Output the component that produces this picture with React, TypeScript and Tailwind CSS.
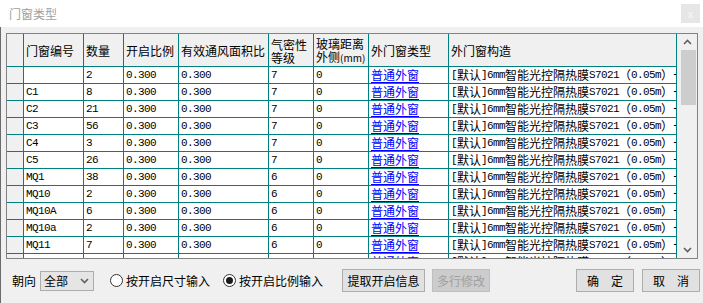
import React from "react";

const CJK = "font-['Noto_Sans_CJK_SC','Microsoft_YaHei',sans-serif]";

function Mixed({ text }: { text: string }) {
  const parts = text.match(/[\x00-\x7f]+|[^\x00-\x7f]+/g) || [];
  return (
    <>
      {parts.map((p, i) =>
        /^[\x00-\x7f]/.test(p) ? (
          <span key={i} className="font-['Liberation_Mono',monospace] text-[11px] tracking-[-0.6px]">
            {p}
          </span>
        ) : (
          <span key={i} className="font-['Noto_Sans_CJK_SC',sans-serif] text-[12px]">
            {p}
          </span>
        )
      )}
    </>
  );
}

const colW = [
  "w-[17px]",
  "w-[60px]",
  "w-[40px]",
  "w-[55px]",
  "w-[90px]",
  "w-[45px]",
  "w-[55px]",
  "w-[80px]",
  "w-[228px]",
];

const headers: (string | string[])[] = [
  "",
  "门窗编号",
  "数量",
  "开启比例",
  "有效通风面积比",
  ["气密性", "等级"],
  ["玻璃距离", "外侧(mm)"],
  "外门窗类型",
  "外门窗构造",
];

const rows: [string, string, string][] = [
  ["", "2", "7"],
  ["C1", "8", "7"],
  ["C2", "21", "7"],
  ["C3", "56", "7"],
  ["C4", "3", "7"],
  ["C5", "26", "7"],
  ["MQ1", "38", "6"],
  ["MQ10", "2", "6"],
  ["MQ10A", "6", "6"],
  ["MQ10a", "2", "6"],
  ["MQ11", "7", "6"],
  ["MQ12", "4", "6"],
];

const CONSTR = "[默认]6mm智能光控隔热膜S7021（0.05m）+";

function Cell({ i, children, gray }: { i: number; children?: React.ReactNode; gray?: boolean }) {
  return (
    <div
      className={`${colW[i]} shrink-0 h-full border-r border-[#008080] pl-[2px] flex items-center overflow-hidden whitespace-nowrap ${
        gray ? "bg-[#f0f0f0]" : "bg-white"
      }`}
    >
      {children}
    </div>
  );
}

function Chevron({ up }: { up?: boolean }) {
  return (
    <svg width="9" height="6" viewBox="0 0 9 6">
      <path
        d={up ? "M1 5 L4.5 1.5 L8 5" : "M1 1 L4.5 4.5 L8 1"}
        fill="none"
        stroke="#606060"
        strokeWidth="1.6"
      />
    </svg>
  );
}

export default function App() {
  return (
    <div className={`w-[703px] h-[303px] overflow-hidden bg-white ${CJK} text-black`}>
      {/* title bar */}
      <div className="h-[27px] bg-white flex items-center justify-between pl-[9px] pr-[3px]">
        <span className="text-[12px] text-[#a0a0a0] leading-none">门窗类型</span>
        <div className="w-[19px] h-[19px] bg-[#e6e6e6] flex items-center justify-center text-[11px] text-[#f8f8f8] leading-none">
          x
        </div>
      </div>
      {/* body */}
      <div className="h-[276px] bg-[#f0f0f0] border-l border-[#6b6b6b] pt-[6px] pl-[5px] flex flex-col">
        {/* table */}
        <div className="w-[692px] h-[226px] border border-[#828282] flex overflow-hidden">
          <div className="w-[670px] shrink-0 h-full overflow-hidden flex flex-col">
            {/* header */}
            <div className="h-[33px] shrink-0 flex border-b border-[#008080] bg-[#f0f0f0]">
              {headers.map((h, i) => (
                <div
                  key={i}
                  className={`${colW[i]} shrink-0 h-full border-r border-[#008080] pl-[2px] flex items-center overflow-hidden whitespace-nowrap text-[12px]`}
                >
                  {Array.isArray(h) ? (
                    <div className="flex flex-col leading-[13px] pt-[1px]">
                      <span>{h[0]}</span>
                      <span>
                        {h[1].replace("(mm)", "")}
                        {h[1].includes("(mm)") && <span className="text-[10px]">(mm)</span>}
                      </span>
                    </div>
                  ) : (
                    <span className="leading-none pt-[2px]">{h}</span>
                  )}
                </div>
              ))}
            </div>
            {/* rows */}
            {rows.map((r, ri) => (
              <div key={ri} className="h-[17px] shrink-0 flex border-b border-[#008080]">
                <Cell i={0} gray />
                <Cell i={1}>
                  <Mixed text={r[0]} />
                </Cell>
                <Cell i={2}>
                  <Mixed text={r[1]} />
                </Cell>
                <Cell i={3}>
                  <Mixed text="0.300" />
                </Cell>
                <Cell i={4}>
                  <Mixed text="0.300" />
                </Cell>
                <Cell i={5}>
                  <Mixed text={r[2]} />
                </Cell>
                <Cell i={6}>
                  <Mixed text="0" />
                </Cell>
                <Cell i={7}>
                  <span className="text-[12px] text-[#0000ff] underline underline-offset-2 leading-none">普通外窗</span>
                </Cell>
                <Cell i={8}>
                  <Mixed text={CONSTR} />
                </Cell>
              </div>
            ))}
          </div>
          {/* scrollbar */}
          <div className="flex-1 h-full bg-[#f0f0f0] flex flex-col items-center">
            <div className="h-[16px] w-full flex items-center justify-center">
              <Chevron up />
            </div>
            <div className="w-[15px] h-[55px] bg-[#cdcdcd] ml-[2px]" />
            <div className="flex-1" />
            <div className="h-[16px] w-full flex items-center justify-center">
              <Chevron />
            </div>
          </div>
        </div>
        {/* bottom bar */}
        <div className="flex-1 flex items-center text-[12px] pl-[6px] pb-[1px]">
          <span className="leading-none">朝向</span>
          <div className="ml-[4px] w-[54px] h-[20px] bg-[#e5e5e5] border border-[#adadad] flex items-center justify-between pl-[3px] pr-[4px]">
            <span className="leading-none">全部</span>
            <Chevron />
          </div>
          <div className="ml-[16px] w-[13px] h-[13px] rounded-full border border-[#333333] bg-white" />
          <span className="ml-[3px] leading-none">按开启尺寸输入</span>
          <div className="ml-[13px] w-[13px] h-[13px] rounded-full border border-[#333333] bg-white flex items-center justify-center">
            <div className="w-[7px] h-[7px] rounded-full bg-[#1a1a1a]" />
          </div>
          <span className="ml-[3px] leading-none">按开启比例输入</span>
          <div className="ml-[19px] w-[83px] h-[23px] bg-[#e1e1e1] border border-[#adadad] flex items-center justify-center">
            提取开启信息
          </div>
          <div className="ml-[7px] w-[58px] h-[23px] bg-[#cccccc] border border-[#bfbfbf] flex items-center justify-center text-[#a0a0a0]">
            多行修改
          </div>
          <div className="ml-[86px] w-[58px] h-[23px] bg-[#e1e1e1] border border-[#adadad] flex items-center justify-center">
            确　定
          </div>
          <div className="ml-[8px] w-[58px] h-[23px] bg-[#e1e1e1] border border-[#adadad] flex items-center justify-center">
            取　消
          </div>
        </div>
      </div>
    </div>
  );
}
